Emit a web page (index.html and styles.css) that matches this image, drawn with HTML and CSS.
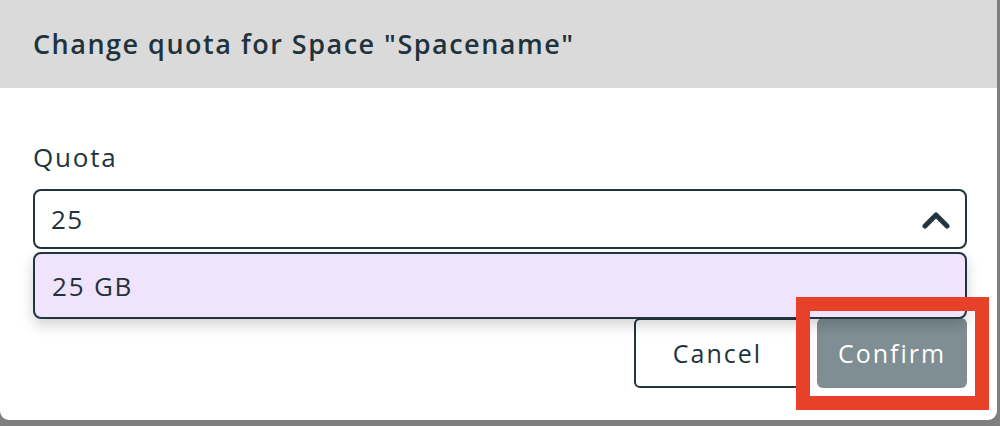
FILE: index.html
```html
<!DOCTYPE html>
<html lang="en">
<head>
<meta charset="utf-8">
<title>Change quota</title>
<link rel="stylesheet" href="styles.css">
</head>
<body>
<div class="modal">
  <div class="modal-header">
    <h2 class="modal-title">Change quota for Space "Spacename"</h2>
  </div>
  <div class="modal-body">
    <label class="field-label">Quota</label>
    <div class="select">
      <span class="select-value">25</span>
      <svg class="chevron" width="28" height="20" viewBox="0 0 28 20"><polyline points="3,16 14,5 25,16" fill="none" stroke="#22353f" stroke-width="5" stroke-linecap="round" stroke-linejoin="round"/></svg>
      <div class="dropdown">
        <div class="option">25 GB</div>
      </div>
    </div>
    <div class="actions">
      <button class="btn btn-cancel">Cancel</button>
      <button class="btn btn-confirm">Confirm</button>
    </div>
  </div>
  <div class="highlight"></div>
</div>
</body>
</html>
```
FILE: styles.css
```css
html, body {
  margin: 0;
  padding: 0;
}
body {
  background: #7f7f7f;
  width: 1000px;
  height: 426px;
  overflow: hidden;
  font-family: "Open Sans", Lato, sans-serif;
  color: #1f333d;
}
.modal {
  position: relative;
  width: 997px;
  height: 420px;
  background: #ffffff;
  border-radius: 0 0 9px 9px;
}
.modal-header {
  height: 88px;
  background: #dadada;
  display: flex;
  align-items: center;
  padding: 0 33px 2px;
  box-sizing: border-box;
}
.modal-title {
  margin: 0;
  font-size: 27px;
  font-weight: 600;
  letter-spacing: 1.5px;
  color: #1f333d;
}
.modal-body {
  padding: 52px 30px 0 33px;
}
.field-label {
  display: block;
  font-size: 26px;
  line-height: 34px;
  letter-spacing: 1.8px;
  margin-bottom: 15px;
}
.select {
  position: relative;
  height: 60px;
  box-sizing: border-box;
  border: 2px solid #22353f;
  border-radius: 8px;
  display: flex;
  align-items: center;
  justify-content: space-between;
  padding: 0 15px 0 16px;
}
.select-value {
  font-size: 26px;
  letter-spacing: 1.5px;
}
.chevron {
  display: block;
  margin-top: 2px;
}
.dropdown {
  position: absolute;
  left: -2px;
  right: -2px;
  top: 61px;
  height: 67px;
  box-sizing: border-box;
  background: #f0e4fc;
  border: 2px solid #22353f;
  border-radius: 8px;
  box-shadow: 0 6px 14px rgba(0, 0, 0, 0.18);
  display: flex;
  align-items: center;
  padding: 0 17px;
  z-index: 2;
}
.option {
  font-size: 26px;
  letter-spacing: 1.8px;
}
.actions {
  display: flex;
  justify-content: flex-end;
  gap: 16px;
  margin-top: 69px;
}
.btn {
  height: 70px;
  font-family: inherit;
  font-size: 25px;
  letter-spacing: 2px;
  border-radius: 6px;
  cursor: pointer;
  padding: 0;
}
.btn-cancel {
  width: 167px;
  background: #ffffff;
  color: #1f333d;
  border: 2px solid #22353f;
}
.btn-confirm {
  width: 150px;
  background: #7e8e93;
  color: #ffffff;
  border: none;
}
.highlight {
  position: absolute;
  left: 796px;
  top: 297px;
  width: 193px;
  height: 113px;
  box-sizing: border-box;
  border: 14px solid #e8412a;
  z-index: 3;
}
```
